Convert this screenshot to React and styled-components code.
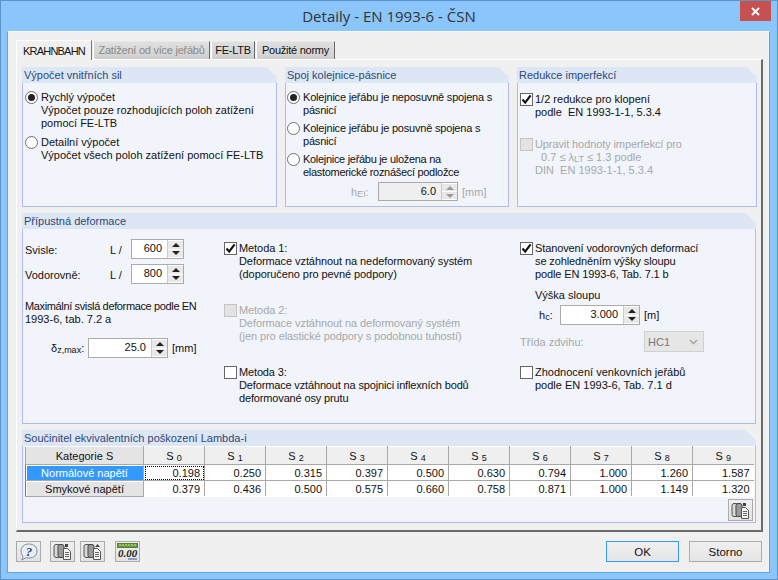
import React from 'react';
import styled, { createGlobalStyle, css } from 'styled-components';

const Global = createGlobalStyle`
  html, body { margin: 0; padding: 0; }
  body { width: 778px; height: 580px; overflow: hidden; font-family: "Liberation Sans", Tahoma, sans-serif; font-size: 11px; color: #111; }
`;

const Win = styled.div`
  width: 778px;
  height: 580px;
  box-sizing: border-box;
  background: #8ac5fb;
  border: 1px solid #5f93c4;
  display: flex;
  flex-direction: column;
  position: relative;
`;
const TitleBar = styled.div`
  height: 30px;
  flex: none;
  display: flex;
  align-items: center;
  justify-content: center;
  font-family: "Open Sans", sans-serif;
  font-size: 15px;
  color: #333;
`;
const CloseBtn = styled.div`
  position: absolute;
  right: 6px;
  top: 0;
  width: 31px;
  height: 20px;
  background: #c75050;
  display: flex;
  align-items: center;
  justify-content: center;
`;
const Client = styled.div`
  margin: 0 7px 0 6px;
  height: 542px;
  flex: none;
  box-sizing: border-box;
  background: #f0f0f0;
  border: 1px solid #5fa3e8;
  border-top-color: #f4f8fc;
  padding: 8px 6px 0 8px;
  display: flex;
  flex-direction: column;
`;
const TabRow = styled.div`
  display: flex;
  height: 19px;
  align-items: flex-end;
  position: relative;
  z-index: 1;
`;
const Tab = styled.div`
  box-sizing: border-box;
  width: ${p => p.$w}px;
  text-align: center;
  white-space: nowrap;
  letter-spacing: -0.25px;
  ${p => p.$active ? css`
    height: 20px;
    margin-bottom: -1px;
    background: #f0f0f0;
    border: 1px solid #fff;
    border-bottom: none;
    border-right: 1px solid #777;
    line-height: 20px;
    color: #111;
    letter-spacing: -0.8px;
  ` : css`
    height: 18px;
    margin-left: 1px;
    background: linear-gradient(#e0e0e0, #cfcfcf);
    border-top: 1px solid #e8e8e8;
    border-left: 1px solid #fff;
    border-right: 1px solid #666;
    line-height: 17px;
    color: ${p.$disabled ? '#8a8a8a' : '#111'};
  `}
`;
const TabPanel = styled.div`
  box-sizing: border-box;
  width: 747px;
  height: 473px;
  border-top: 1px solid #fff;
  border-left: 1px solid #fff;
  border-right: 2px solid #6a6a6a;
  border-bottom: 2px solid #6a6a6a;
  padding: 7px 5px 0 5px;
  display: flex;
  flex-direction: column;
  gap: 6px;
`;
const TopRow = styled.div`
  display: flex;
  gap: 8px;
`;
const Group = styled.section`
  box-sizing: border-box;
  width: ${p => p.$w ? `${p.$w}px` : '100%'};
  height: ${p => p.$h}px;
  flex: none;
  background: #f1f4fa;
  border: 1px solid #b3b8ef;
  border-top: none;
  position: relative;
  display: flex;
  flex-direction: column;
`;
const GroupHead = styled.h3`
  margin: 0 -1px;
  height: 16px;
  flex: none;
  font-size: 11px;
  font-weight: 400;
  line-height: 16px;
  padding-left: 2px;
  color: #2c4a78;
  background: linear-gradient(225deg, #f0f0f0 7px, #dde6f4 7.5px);
`;
const GroupBody = styled.div`
  padding: ${p => p.$pad || '8px 3px 0 2px'};
  display: flex;
  flex-direction: column;
`;
const Option = styled.div`
  display: flex;
  gap: ${p => p.$gap ?? 2}px;
  line-height: 13px;
  margin-top: ${p => p.$mt || 0}px;
  color: ${p => p.$disabled ? '#a8a8a8' : '#111'};
`;
const Text = styled.div`
  white-space: pre;
  padding-left: ${p => p.$pl || 0}px;
  margin-top: ${p => p.$mt || 0}px;
  line-height: 13px;
  letter-spacing: ${p => p.$ls || 0}px;
  color: ${p => p.$disabled ? '#a8a8a8' : '#111'};
`;
const Radio = styled.span`
  width: 13px;
  height: 13px;
  flex: none;
  box-sizing: border-box;
  border: 1px solid #6f6f6f;
  border-radius: 50%;
  background: #fff;
  display: flex;
  align-items: center;
  justify-content: center;
  &::after {
    content: '';
    display: ${p => p.$on ? 'block' : 'none'};
    width: 7px;
    height: 7px;
    border-radius: 50%;
    background: #222;
  }
`;
const CheckBox = styled.span`
  width: 13px;
  height: 13px;
  flex: none;
  box-sizing: border-box;
  border: 1px solid ${p => p.$disabled ? '#c4c4c4' : '#666'};
  background: ${p => p.$disabled ? '#e3e3e3' : '#fff'};
  display: flex;
  align-items: center;
  justify-content: center;
`;
const Field = styled.div`
  display: flex;
  align-items: center;
  gap: ${p => p.$gap ?? 4}px;
  padding-left: ${p => p.$pl || 0}px;
  margin-top: ${p => p.$mt || 0}px;
  color: ${p => p.$disabled ? '#a8a8a8' : '#111'};
`;
const Spin = styled.div`
  box-sizing: border-box;
  width: ${p => p.$w}px;
  height: ${p => p.$h || 20}px;
  flex: none;
  display: flex;
  border: 1px solid #ababab;
  background: ${p => p.$disabled ? '#efefef' : '#fff'};
`;
const SpinValue = styled.div`
  flex: 1;
  text-align: right;
  padding-right: 5px;
  line-height: 17px;
  font-size: 11px;
  color: #111;
`;
const SpinBtns = styled.div`
  width: 15px;
  display: flex;
  flex-direction: column;
  gap: 1px;
  background: #fff;
  padding: 1px 0 1px 0;
  border-left: 1px solid #ccc;
`;
const SpinBtn = styled.div`
  flex: 1;
  background: #e8e8e8;
  display: flex;
  align-items: center;
  justify-content: center;
  &::after {
    content: '';
    border-left: 4px solid transparent;
    border-right: 4px solid transparent;
    ${p => p.$down ? 'border-top' : 'border-bottom'}: 4px solid ${p => p.$disabled ? '#9a9a9a' : '#222'};
  }
`;
const Small = styled.sub`
  font-size: 9px;
  line-height: 9px;
  vertical-align: baseline;
  position: relative;
  top: 1px;
`;
const Label = styled.span`
  width: ${p => p.$w ? `${p.$w}px` : 'auto'};
  margin-left: ${p => p.$ml || 0}px;
  padding-top: ${p => p.$pt || 0}px;
  flex: none;
`;
const DefColumns = styled.div`
  display: grid;
  grid-template-columns: 199px 296px 1fr;
  padding: 10px 0 0 2px;
`;
const DefColumn = styled.div`
  display: flex;
  flex-direction: column;
  padding-top: ${p => p.$pt || 0}px;
`;
const Select = styled.div`
  box-sizing: border-box;
  width: 60px;
  height: 21px;
  background: #e6e6e6;
  border: 1px solid #d0d0d0;
  padding-left: 3px;
  display: flex;
  align-items: center;
  justify-content: space-between;
  padding-right: 5px;
  color: #777;
  margin-left: auto;
`;
const ClassRow = styled(Field)`
  width: 184px;
`;
const Table = styled.table`
  border-collapse: collapse;
  table-layout: fixed;
  width: 728px;
  margin: 0 0 0 2px;
  background: #fff;
`;
const Th = styled.th`
  height: 17px;
  padding: 0;
  font-weight: 400;
  font-size: 11px;
  text-align: center;
  background: ${p => p.$first ? '#e4e4e4' : '#efefef'};
  border-right: 1px solid #a8a8a8;
  border-bottom: 1px solid #a8a8a8;
  border-top: 1px solid #fff;
  ${p => p.$first && 'border-left: 1px solid #a8a8a8;'}
  &:last-child { border-right: none; }
`;
const RowHead = styled.th`
  height: 15px;
  padding: 0;
  font-weight: 400;
  font-size: 11px;
  text-align: center;
  background: ${p => p.$sel ? '#3399ff' : '#e4e4e4'};
  color: ${p => p.$sel ? '#fff' : '#111'};
  border-left: 1px solid #777;
  border-right: 1px solid #a8a8a8;
  border-bottom: 1px solid #a8a8a8;
  box-shadow: inset 1px 1px 0 #fff;
`;
const Td = styled.td`
  padding: 0 4px 0 0;
  text-align: right;
  font-size: 11px;
  border-right: 1px solid #a8a8a8;
  border-bottom: 1px solid ${p => p.$last ? '#fff' : '#a8a8a8'};
  outline: ${p => p.$focus ? '1px dotted #000' : 'none'};
  outline-offset: -2px;
  &:last-child { border-right: none; }
`;
const TableTools = styled.div`
  display: flex;
  justify-content: flex-end;
  padding: 2px 2px 0 0;
`;
const ToolBtn = styled.button`
  width: ${p => p.$w || 25}px;
  height: ${p => p.$h || 21}px;
  padding: 0;
  margin-left: ${p => p.$ml || 0}px;
  box-sizing: border-box;
  border: 1px solid #ababab;
  background: linear-gradient(#f0f0f0, #e2e2e2);
  display: flex;
  align-items: center;
  justify-content: center;
`;
const Footer = styled.div`
  display: flex;
  align-items: flex-start;
  padding: 9px 1px 0 0;
  gap: 5px;
`;
const FooterSpacer = styled.div`
  flex: 1;
`;
const DlgBtn = styled.button`
  width: 73px;
  height: 21px;
  padding: 0;
  box-sizing: border-box;
  font-family: inherit;
  font-size: 11.5px;
  color: #111;
  margin-left: ${p => p.$ml || 0}px;
  border: 1px solid ${p => p.$primary ? '#3399ff' : '#acacac'};
  background: linear-gradient(#f0f0f0, #e5e5e5);
`;

const Check = () => (
  <svg width="11" height="11" viewBox="0 0 11 11"><path d="M1.5 5.5 L4.2 8.6 L9.6 1.4" fill="none" stroke="#111" strokeWidth="2.2" /></svg>
);

const Spinner = ({ w, h, value, disabled }) => (
  <Spin $w={w} $h={h} $disabled={disabled}>
    <SpinValue>{value}</SpinValue>
    <SpinBtns>
      <SpinBtn $disabled={disabled} />
      <SpinBtn $down $disabled={disabled} />
    </SpinBtns>
  </Spin>
);

const CopyIcon = ({ up }) => (
  <svg width="19" height="17" viewBox="0 0 19 17">
    <rect x="1" y="1.500" width="6" height="13" rx="2" fill="#d8d8d8" stroke="#555" />
    <rect x="5" y="1.500" width="6" height="13" rx="2" fill="#9a9a9a" stroke="#444" />
    <path d="M10.500 5.500h4l3 3v8h-7z" fill="#f4f4f4" stroke="#555" />
    <path d="M12 9.500h4M12 11.500h4M12 13.500h4" stroke="#666" />
    <path d={up ? 'M12 4l2.500-3 2.500 3z' : 'M12 1h3v3h-3z'} fill="#444" />
  </svg>
);

const HelpIcon = () => (
  <svg width="20" height="18" viewBox="0 0 20 18">
    <path d="M10 1c5 0 8 3 8 7s-3 7-8 7c-1 0-2 0-3-.4L3 17l1-4C2.600 12 2 10 2 8c0-4 3-7 8-7z" fill="#e9edf4" stroke="#7f8ba0" />
    <text x="10" y="13" textAnchor="middle" fontFamily="Liberation Serif, serif" fontWeight="700" fontStyle="italic" fontSize="13" fill="#2c4a78">?</text>
  </svg>
);

const ZeroIcon = () => (
  <svg width="21" height="18" viewBox="0 0 21 18">
    <rect x="0.500" y="0.500" width="20" height="4" fill="#6a9a3c" stroke="#55802c" />
    <path d="M3 1v2M6 1v2M9 1v2M12 1v2M15 1v2M18 1v2" stroke="#cfe0b0" />
    <text x="10.500" y="14" textAnchor="middle" fontFamily="Liberation Serif, serif" fontStyle="italic" fontWeight="700" fontSize="11" fill="#222">0.00</text>
    <path d="M11 16h9" stroke="#2c5ca8" />
  </svg>
);

const subs = [0, 1, 2, 3, 4, 5, 6, 7, 8, 9];
const rows = [
  { name: 'Normálové napětí', sel: true, values: ['0.198', '0.250', '0.315', '0.397', '0.500', '0.630', '0.794', '1.000', '1.260', '1.587'] },
  { name: 'Smykové napětí', values: ['0.379', '0.436', '0.500', '0.575', '0.660', '0.758', '0.871', '1.000', '1.149', '1.320'] },
];

export default function App() {
  return (
    <Win>
      <Global />
      <TitleBar>Detaily - EN 1993-6 - ČSN</TitleBar>
      <CloseBtn>
        <svg width="9" height="9" viewBox="0 0 9 9"><path d="M1 1l7 7M8 1L1 8" stroke="#fff" strokeWidth="2" /></svg>
      </CloseBtn>
      <Client>
        <TabRow>
          <Tab $active $w={76}>KRAHNBAHN</Tab>
          <Tab $disabled $w={117}>Zatížení od více jeřábů</Tab>
          <Tab $w={44}>FE-LTB</Tab>
          <Tab $w={79}>Použité normy</Tab>
        </TabRow>
        <TabPanel>
          <TopRow>
            <Group $w={255} $h={140}>
              <GroupHead>Výpočet vnitřních sil</GroupHead>
              <GroupBody>
                <Option $gap={3}><Radio $on /><Text>{'Rychlý výpočet\nVýpočet pouze rozhodujících poloh zatížení\npomocí FE-LTB'}</Text></Option>
                <Option $gap={3} $mt={6}><Radio /><Text>{'Detailní výpočet\nVýpočet všech poloh zatížení pomocí FE-LTB'}</Text></Option>
              </GroupBody>
            </Group>
            <Group $w={224} $h={140}>
              <GroupHead>Spoj kolejnice-pásnice</GroupHead>
              <GroupBody $pad="8px 3px 0 1px">
                <Option $gap={3}><Radio $on /><Text $ls={-0.2}>{'Kolejnice jeřábu je neposuvně spojena s\npásnicí'}</Text></Option>
                <Option $gap={3} $mt={5}><Radio /><Text $ls={-0.2}>{'Kolejnice jeřábu je posuvně spojena s\npásnicí'}</Text></Option>
                <Option $gap={3} $mt={5}><Radio /><Text $ls={-0.3}>{'Kolejnice jeřábu je uložena na\nelastomerické roznášecí podložce'}</Text></Option>
                <Field $pl={64} $mt={3} $gap={0} $disabled>
                  <Label $w={27}>h<Small>EI</Small>:</Label>
                  <Spinner w={80} h={19} value="6.0" disabled />
                  <Label $ml={4}>[mm]</Label>
                </Field>
              </GroupBody>
            </Group>
            <Group $w={240} $h={140}>
              <GroupHead>Redukce imperfekcí</GroupHead>
              <GroupBody $pad="10px 3px 0 2px">
                <Option><CheckBox><Check /></CheckBox><Text>{'1/2 redukce pro klopení\npodle  EN 1993-1-1, 5.3.4'}</Text></Option>
                <Option $mt={19} $disabled>
                  <CheckBox $disabled />
                  <div>
                    <Text $disabled $ls={-0.1}>Upravit hodnoty imperfekcí pro</Text>
                    <Text $disabled>{'  0.7 ≤ λ'}<Small>LT</Small> ≤ 1.3 podle</Text>
                    <Text $disabled>DIN  EN 1993-1-1, 5.3.4</Text>
                  </div>
                </Option>
              </GroupBody>
            </Group>
          </TopRow>
          <Group $h={211}>
            <GroupHead>Přípustná deformace</GroupHead>
            <DefColumns>
              <DefColumn>
                <Field $gap={0}><Label $w={85} $pt={2}>Svisle:</Label><Label $w={21} $pt={2}>L /</Label><Spinner w={53} value="600" /></Field>
                <Field $gap={0} $mt={5}><Label $w={85} $pt={2}>Vodorovně:</Label><Label $w={21} $pt={2}>L /</Label><Spinner w={53} value="800" /></Field>
                <Text $mt={16} $ls={-0.36}>Maximální svislá deformace podle EN</Text>
                <Text>1993-6, tab. 7.2 a</Text>
                <Field $pl={26} $mt={12} $gap={0}>
                  <Label $w={37}>δ<Small>z,max</Small>:</Label>
                  <Spinner w={80} value="25.0" />
                  <Label $ml={4}>[mm]</Label>
                </Field>
              </DefColumn>
              <DefColumn $pt={3}>
                <Option><CheckBox><Check /></CheckBox><Text $ls={-0.08}>{'Metoda 1:\nDeformace vztáhnout na nedeformovaný systém\n(doporučeno pro pevné podpory)'}</Text></Option>
                <Option $mt={23} $disabled><CheckBox $disabled /><Text $disabled $ls={-0.08}>{'Metoda 2:\nDeformace vztáhnout na deformovaný systém\n(jen pro elastické podpory s podobnou tuhostí)'}</Text></Option>
                <Option $mt={23}><CheckBox /><Text $ls={-0.15}>{'Metoda 3:\nDeformace vztáhnout na spojnici inflexních bodů\ndeformované osy prutu'}</Text></Option>
              </DefColumn>
              <DefColumn $pt={3}>
                <Option><CheckBox><Check /></CheckBox><Text $ls={-0.12}>{'Stanovení vodorovných deformací\nse zohledněním výšky sloupu\npodle EN 1993-6, Tab. 7.1 b'}</Text></Option>
                <Text $pl={15} $mt={8}>Výška sloupu</Text>
                <Field $pl={19} $mt={3} $gap={0}>
                  <Label $w={21}>h<Small>c</Small>:</Label>
                  <Spinner w={80} value="3.000" />
                  <Label $ml={4}>[m]</Label>
                </Field>
                <ClassRow $mt={6} $disabled>
                  <Label>Třída zdvihu:</Label>
                  <Select>HC1
                    <svg width="9" height="6" viewBox="0 0 9 6"><path d="M1 1l3.500 3.500L8 1" fill="none" stroke="#aaa" strokeWidth="1.600" /></svg>
                  </Select>
                </ClassRow>
                <Option $mt={14}><CheckBox /><Text>{'Zhodnocení venkovních jeřábů\npodle EN 1993-6, Tab. 7.1 d'}</Text></Option>
              </DefColumn>
            </DefColumns>
          </Group>
          <Group $h={93}>
            <GroupHead>Součinitel ekvivalentních poškození Lambda-i</GroupHead>
            <Table>
              <colgroup>
                <col style={{ width: 118 }} />
                {subs.map(n => <col key={n} style={{ width: 61 }} />)}
              </colgroup>
              <thead>
                <tr>
                  <Th $first>Kategorie S</Th>
                  {subs.map(n => <Th key={n}>S <Small>{n}</Small></Th>)}
                </tr>
              </thead>
              <tbody>
                {rows.map((r, i) => (
                  <tr key={r.name}>
                    <RowHead $sel={r.sel}>{r.name}</RowHead>
                    {r.values.map((v, j) => (
                      <Td key={j} $focus={i === 0 && j === 0} $last={i === 1}>{v}</Td>
                    ))}
                  </tr>
                ))}
              </tbody>
            </Table>
            <TableTools><ToolBtn $h={22}><CopyIcon /></ToolBtn></TableTools>
          </Group>
        </TabPanel>
        <Footer>
          <ToolBtn><HelpIcon /></ToolBtn>
          <ToolBtn $ml={4}><CopyIcon /></ToolBtn>
          <ToolBtn><CopyIcon up /></ToolBtn>
          <ToolBtn $ml={5}><ZeroIcon /></ToolBtn>
          <FooterSpacer />
          <DlgBtn $primary>OK</DlgBtn>
          <DlgBtn $ml={5}>Storno</DlgBtn>
        </Footer>
      </Client>
    </Win>
  );
}
